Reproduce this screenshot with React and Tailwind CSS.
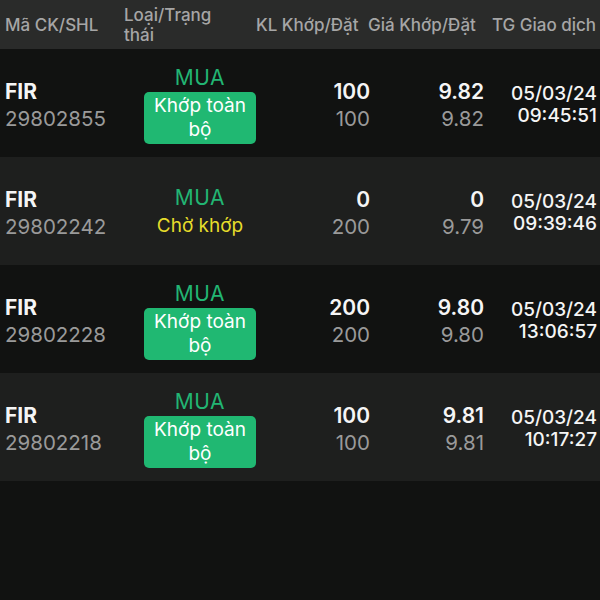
import React from 'react'

const orders = [
  { code: 'FIR', id: '29802855', matchedQty: '100', qty: '100', matchedPrice: '9.82', price: '9.82', date: '05/03/24', time: '09:45:51', status: 'full' },
  { code: 'FIR', id: '29802242', matchedQty: '0', qty: '200', matchedPrice: '0', price: '9.79', date: '05/03/24', time: '09:39:46', status: 'pending' },
  { code: 'FIR', id: '29802228', matchedQty: '200', qty: '200', matchedPrice: '9.80', price: '9.80', date: '05/03/24', time: '13:06:57', status: 'full' },
  { code: 'FIR', id: '29802218', matchedQty: '100', qty: '100', matchedPrice: '9.81', price: '9.81', date: '05/03/24', time: '10:17:27', status: 'full' },
]

const OrderRow = ({ order, shaded }) => (
  <div className={`flex items-center h-[108px] pt-[3px] ${shaded ? 'bg-[#1e1f1e]' : 'bg-[#111211]'}`}>
    <div className="w-[120px] pl-[5px] flex flex-col leading-[27px]">
      <span className="text-[21px] font-bold text-[#f5f5f5]">{order.code}</span>
      <span className="text-[20.5px] text-[#9a9a9a]">{order.id}</span>
    </div>

    <div className="w-[160px] flex flex-col items-center">
      <span className="text-[21px] leading-[24px] text-[#22b573] tracking-wide">MUA</span>
      {order.status === 'full' ? (
        <div className="mt-[2px] w-[112px] h-[52px] rounded-[5px] bg-[#20b872] flex items-center justify-center text-center text-[19px] leading-[24px] text-white">
          Khớp toàn<br />bộ
        </div>
      ) : (
        <span className="mt-[2px] text-[19px] leading-[27px] text-[#e6dd2b]">Chờ khớp</span>
      )}
    </div>

    <div className="w-[90px] flex flex-col items-end leading-[27px]">
      <span className="text-[21px] font-semibold text-[#f5f5f5]">{order.matchedQty}</span>
      <span className="text-[20.5px] text-[#9a9a9a]">{order.qty}</span>
    </div>

    <div className="w-[114px] flex flex-col items-end leading-[27px]">
      <span className="text-[21px] font-semibold text-[#f5f5f5]">{order.matchedPrice}</span>
      <span className="text-[20.5px] text-[#9a9a9a]">{order.price}</span>
    </div>

    <div className="flex-1 pr-[3px] flex flex-col items-end text-[19px] leading-[22px] text-[#f5f5f5] whitespace-nowrap">
      <span className="font-medium">{order.date}</span>
      <span className="font-medium">{order.time}</span>
    </div>
  </div>
)

export default function App() {
  return (
    <div className="w-[600px] min-h-[600px] bg-[#111211] overflow-hidden" style={{ fontFamily: 'Inter, "Noto Sans", sans-serif' }}>
      <div className="flex items-center h-[49px] bg-[#2a2b2a] text-[17px] leading-[20px] text-[#a6a6a6] font-medium whitespace-nowrap">
        <div className="w-[124px] pl-[5px]">Mã CK/SHL</div>
        <div className="w-[132px] pt-[1px]">Loại/Trạng<br />thái</div>
        <div className="w-[112px]">KL Khớp/Đặt</div>
        <div className="w-[124px]">Giá Khớp/Đặt</div>
        <div className="flex-1">TG Giao dịch</div>
      </div>
      {orders.map((o, i) => (
        <OrderRow key={o.id} order={o} shaded={i % 2 === 1} />
      ))}
    </div>
  )
}
